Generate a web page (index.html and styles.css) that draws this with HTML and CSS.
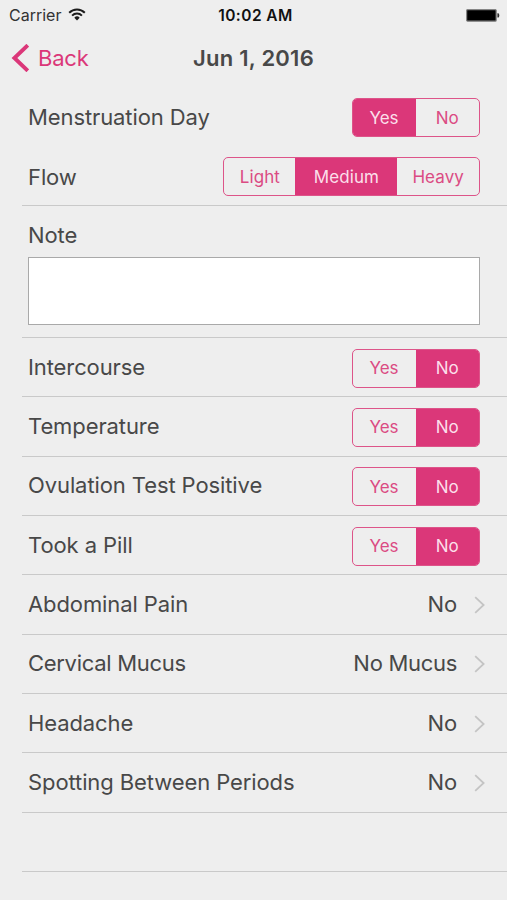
FILE: index.html
```html
<!DOCTYPE html>
<html lang="en">
<head>
<meta charset="utf-8">
<title>Jun 1, 2016</title>
<link rel="stylesheet" href="styles.css">
</head>
<body>
<div class="status">
  <div class="carrier"><span>Carrier</span>
    <svg class="wifi" width="18" height="13" viewBox="0 0 18 13" fill="none" stroke="#1c1c1c" stroke-width="2"><path d="M1.2 4.7a11 11 0 0 1 15.6 0M4.1 7.6a6.9 6.9 0 0 1 9.8 0"/><path d="M9 12.4 6.3 9.7a3.8 3.8 0 0 1 5.4 0z" fill="#1c1c1c" stroke="none"/></svg>
  </div>
  <time class="clock">10:02 AM</time>
  <svg class="battery" width="34" height="13" viewBox="0 0 34 13"><rect x=".6" y=".6" width="29.6" height="11.6" rx="1" fill="#000" stroke="#858585" stroke-width="1.2"/><path d="M31.4 4.2h.7q1.2 0 1.2 2.2t-1.2 2.2h-.7z" fill="#333"/></svg>
</div>
<header class="nav">
  <a class="back"><svg width="18" height="28" viewBox="0 0 18 28" fill="none" stroke="#db3779" stroke-width="3.9"><path d="M16.8 1.2 3.4 14l13.4 12.8"/></svg><span>Back</span></a>
  <h1 class="title">Jun 1, 2016</h1>
</header>
<main class="list">
  <div class="row plain"><span class="label">Menstruation Day</span><div class="seg"><span class="opt on">Yes</span><span class="opt">No</span></div></div>
  <div class="row flow"><span class="label">Flow</span><div class="seg seg-flow"><span class="opt">Light</span><span class="opt on">Medium</span><span class="opt">Heavy</span></div></div>
  <div class="note"><span class="label">Note</span><div class="box"></div></div>
  <div class="row"><span class="label">Intercourse</span><div class="seg"><span class="opt">Yes</span><span class="opt on">No</span></div></div>
  <div class="row"><span class="label">Temperature</span><div class="seg"><span class="opt">Yes</span><span class="opt on">No</span></div></div>
  <div class="row"><span class="label">Ovulation Test Positive</span><div class="seg"><span class="opt">Yes</span><span class="opt on">No</span></div></div>
  <div class="row"><span class="label">Took a Pill</span><div class="seg"><span class="opt">Yes</span><span class="opt on">No</span></div></div>
  <div class="row link"><span class="label">Abdominal Pain</span><span class="label value">No</span><svg class="chev" width="12" height="18" viewBox="0 0 12 18"><path d="M1.2 1.2 9.6 9l-8.4 7.8"/></svg></div>
  <div class="row link"><span class="label tight">Cervical Mucus</span><span class="label value tight">No Mucus</span><svg class="chev" width="12" height="18" viewBox="0 0 12 18"><path d="M1.2 1.2 9.6 9l-8.4 7.8"/></svg></div>
  <div class="row link"><span class="label">Headache</span><span class="label value">No</span><svg class="chev" width="12" height="18" viewBox="0 0 12 18"><path d="M1.2 1.2 9.6 9l-8.4 7.8"/></svg></div>
  <div class="row link"><span class="label">Spotting Between Periods</span><span class="label value">No</span><svg class="chev" width="12" height="18" viewBox="0 0 12 18"><path d="M1.2 1.2 9.6 9l-8.4 7.8"/></svg></div>
  <div class="row"></div>
</main>
</body>
</html>
```

FILE: styles.css
```css
* { box-sizing: border-box; }
body {
  margin: 0;
  height: 900px;
  overflow: hidden;
  background: #eeeeee;
  color: #484848;
  font-family: Inter, "Liberation Sans", sans-serif;
}
.status {
  display: grid;
  grid-template-columns: 1fr auto 1fr;
  align-items: center;
  height: 30px;
  padding: 0 7px 0 9px;
}
.carrier {
  display: flex;
  align-items: center;
  gap: 7px;
  font-size: 16px;
  letter-spacing: 0;
  color: #333;
}
.wifi { margin-top: -1px; }
.clock {
  padding-left: 2px;
  font-size: 15.5px;
  font-weight: 600;
  letter-spacing: 0.45px;
  color: #111;
}
.battery { justify-self: end; }
.nav {
  display: grid;
  grid-template-columns: 1fr auto 1fr;
  align-items: center;
  height: 57px;
  padding: 0 11px 2px;
}
.back {
  display: flex;
  align-items: center;
  gap: 9px;
  font-size: 22px;
  letter-spacing: -0.2px;
  color: #db3779;
}
.title {
  margin: 0;
  font-size: 22px;
  font-weight: 600;
  letter-spacing: 0.25px;
}
.list { padding-left: 22px; }
.row {
  display: flex;
  align-items: center;
  justify-content: space-between;
  height: 59.333px;
  padding: 1px 27px 0 6px;
  border-bottom: 1px solid #c9c9c9;
}
.plain { height: 60px; border-bottom: 0; }
.flow { height: 59px; }
.label {
  font-size: 22px;
  line-height: 28px;
  letter-spacing: -0.1px;
  white-space: nowrap;
}
.row .label { padding-bottom: 2px; }
.flow .label { padding-bottom: 0; }
.tight { letter-spacing: -0.3px; }
.seg {
  display: grid;
  grid-template-columns: 63px 1fr;
  width: 128.5px;
  height: 39px;
  border: 1px solid #dd5489;
  border-radius: 5px;
  overflow: hidden;
  font-size: 17px;
  color: #db4b83;
}
.seg-flow {
  grid-template-columns: 71px 102px 1fr;
  width: 256.6px;
  letter-spacing: 0.1px;
}
.row + .row .seg, .note + .row .seg { margin-top: 1px; }
.row.flow .seg { margin-top: 0; }
.opt {
  display: flex;
  align-items: center;
  justify-content: center;
}
.on { background: #db3779; color: #fbdfea; }
.note {
  height: 132px;
  padding: 15px 27px 0 6px;
  border-bottom: 1px solid #c9c9c9;
}
.note .label { display: block; }
.box {
  height: 68px;
  margin-top: 8px;
  background: #fff;
  border: 1px solid #a9a9a9;
}
.link { justify-content: flex-start; padding: 1px 21px 0 6px; }
.value { margin-left: auto; margin-right: 17px; }
.chev { fill: none; stroke: #c4c4c4; stroke-width: 1.8; }
```
